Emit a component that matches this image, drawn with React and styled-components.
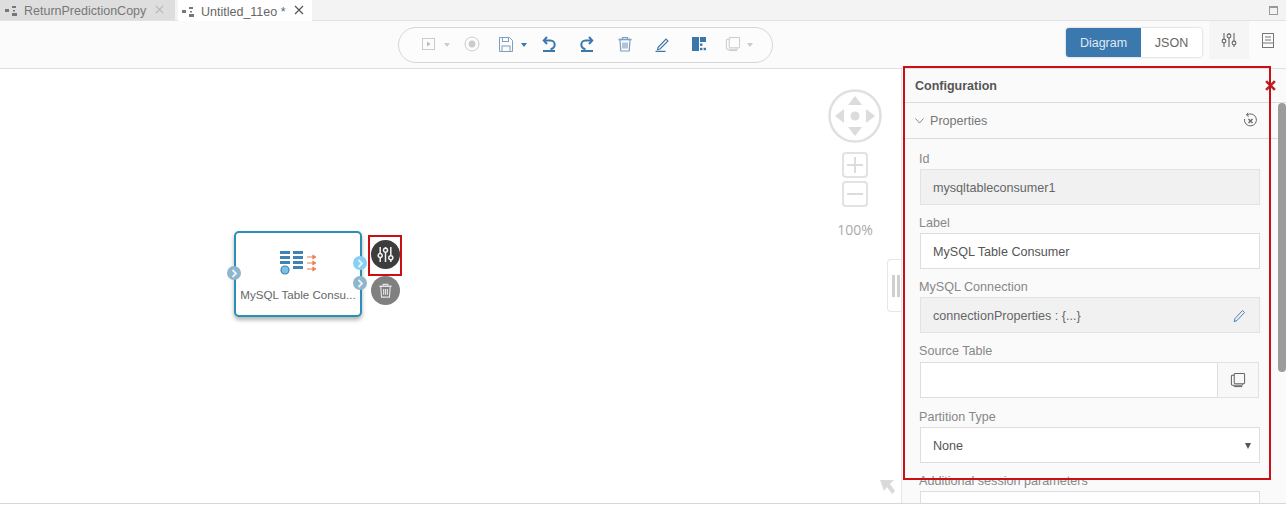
import React from "react";
import styled, { createGlobalStyle } from "styled-components";

const Global = createGlobalStyle`
  html, body { margin: 0; padding: 0; background: #fff; overflow: hidden; }
  body { font-family: "Liberation Sans", Arial, sans-serif; color: #555; }
  #root { width: 1286px; height: 508px; }
`;

const Page = styled.div`
  position: relative;
  width: 1286px;
  height: 508px;
  display: flex;
  flex-direction: column;
  overflow: hidden;
  background: #fff;
`;
const TabBar = styled.div`
  height: 20px;
  flex: none;
  display: flex;
  align-items: flex-end;
  background: #f3f3f3;
  border-bottom: 1px solid #e2e2e2;
  box-sizing: content-box;
  padding-right: 8px;
`;
const Tab = styled.div`
  height: ${(p) => (p.$active ? 21 : 20)}px;
  width: ${(p) => p.$w}px;
  margin-right: ${(p) => p.$mr || 0}px;
  margin-bottom: ${(p) => (p.$active ? -1 : 0)}px;
  box-sizing: border-box;
  display: flex;
  align-items: center;
  gap: 6px;
  padding: 2px 0 0 ${(p) => (p.$active ? 4 : 5)}px;
  font-size: 12.5px;
  background: ${(p) => (p.$active ? "#fff" : "#dedede")};
  color: ${(p) => (p.$active ? "#666" : "#777")};
`;
const TabClose = styled.span`
  margin: -3px 0 0 ${(p) => (p.$active ? 2 : 3)}px;
  display: flex;
  color: ${(p) => (p.$active ? "#555" : "#b5b5b5")};
`;
const WinButton = styled.div`
  margin-left: auto;
  align-self: center;
  display: flex;
`;
const Toolbar = styled.div`
  height: 48px;
  flex: none;
  position: relative;
  display: flex;
  align-items: flex-start;
  background: #fbfbfb;
  border-bottom: 1px solid #e0e0e0;
  box-sizing: border-box;
  padding-left: 398px;
`;
const Pill = styled.div`
  width: 375px;
  height: 36px;
  margin-top: 6px;
  box-sizing: border-box;
  border: 1px solid #d6d6d6;
  border-radius: 18px;
  background: #fcfcfc;
  display: flex;
  align-items: center;
  padding: 0 0 2px 23px;
`;
const ToolIcon = styled.span`
  display: flex;
  align-items: center;
  margin-right: ${(p) => p.$mr || 0}px;
`;
const Caret = styled.span`
  width: 0;
  height: 0;
  border-left: 3.5px solid transparent;
  border-right: 3.5px solid transparent;
  border-top: 4px solid ${(p) => p.$c || "#ccc"};
  margin: 2px ${(p) => p.$mr || 0}px 0 ${(p) => p.$ml ?? 8}px;
`;
const Right = styled.div`
  margin-left: auto;
  display: flex;
  align-items: flex-start;
  height: 100%;
`;
const Segment = styled.div`
  display: flex;
  height: 29px;
  width: 136px;
  margin-top: 7px;
  border-radius: 3px;
  background: #fff;
  box-shadow: 0 0 2px rgba(0, 0, 0, 0.3);
  margin-right: 7px;
  overflow: hidden;
  font-size: 12.5px;
`;
const SegItem = styled.div`
  flex: ${(p) => (p.$active ? "0 0 75px" : 1)};
  display: flex;
  align-items: center;
  justify-content: center;
  background: ${(p) => (p.$active ? "#3a78ad" : "#fff")};
  color: ${(p) => (p.$active ? "#dfeaf4" : "#666")};
`;
const ViewBtn = styled.div`
  width: ${(p) => (p.$active ? 40 : 37)}px;
  height: 38px;
  display: flex;
  align-items: center;
  justify-content: center;
  background: ${(p) => (p.$active ? "#f5f5f5" : "transparent")};
`;
const Main = styled.div`
  flex: 1;
  display: flex;
  min-height: 0;
  border-bottom: 1px solid #d8d8d8;
  margin-bottom: 4px;
`;
const Canvas = styled.div`
  position: relative;
  width: 901px;
  flex: none;
  background: #fff;
`;
const Node = styled.div`
  position: absolute;
  left: 234px;
  top: 162px;
  width: 128px;
  height: 86px;
  box-sizing: border-box;
  border: 2px solid #2a8fb8;
  border-radius: 5px;
  background: #fff;
  box-shadow: 0 3px 4px rgba(0, 0, 0, 0.3);
  display: flex;
  flex-direction: column;
  align-items: center;
  padding-top: 17px;
`;
const NodeIcon = styled.svg`
  margin-left: 0;
`;
const NodeLabel = styled.div`
  font-size: 11.6px;
  color: #666;
  margin-top: 13px;
  white-space: nowrap;
`;
const Port = styled.span`
  position: absolute;
  left: ${(p) => p.$x}px;
  top: ${(p) => p.$y}px;
  width: 14px;
  height: 14px;
  border-radius: 50%;
  background: ${(p) => p.$c};
  display: flex;
  align-items: center;
  justify-content: center;
`;
const RoundAction = styled.div`
  position: absolute;
  left: 371px;
  top: ${(p) => p.$y}px;
  width: 29px;
  height: 29px;
  border-radius: 50%;
  background: ${(p) => p.$c};
  display: flex;
  align-items: center;
  justify-content: center;
`;
const MapControl = styled.div`
  position: absolute;
  left: 828px;
  top: 20px;
  width: 54px;
  display: flex;
  flex-direction: column;
  align-items: center;
`;
const ZoomBox = styled.div`
  width: 26px;
  height: 26px;
  margin-top: ${(p) => p.$mt}px;
  box-sizing: border-box;
  border: 2px solid #e2e2e2;
  border-radius: 4px;
  display: flex;
  align-items: center;
  justify-content: center;
`;
const Percent = styled.div`
  font-family: "Open Sans", sans-serif;
  font-size: 14px;
  line-height: 19px;
  color: #aaa;
  margin-top: 13px;
`;
const Handle = styled.div`
  position: absolute;
  left: 887px;
  top: 190px;
  width: 15px;
  height: 53px;
  box-sizing: border-box;
  border: 1px solid #e6e6e6;
  border-right: none;
  border-radius: 4px 0 0 4px;
  background: #fff;
  display: flex;
  gap: 2px;
  padding: 15px 0 0 4px;
`;
const HandleBar = styled.i`
  width: 3px;
  height: 22px;
  background: #cfcfcf;
`;
const CornerArrow = styled.span`
  position: absolute;
  left: 880px;
  top: 411px;
  display: flex;
`;
const Panel = styled.div`
  position: relative;
  flex: 1;
  background: #fafafa;
  border-left: 1px solid #e6e6e6;
  box-sizing: border-box;
  overflow: hidden;
`;
const PanelHead = styled.div`
  height: 34px;
  box-sizing: border-box;
  border-bottom: 1px solid #dcdcdc;
  display: flex;
  align-items: center;
  padding: 0 0 0 13px;
  font-size: 12.5px;
  font-weight: bold;
  color: #555;
`;
const CloseX = styled.span`
  position: absolute;
  left: 363px;
  top: 11px;
  display: flex;
`;
const Section = styled.div`
  height: 36px;
  box-sizing: border-box;
  border-bottom: 1px solid #dcdcdc;
  display: flex;
  align-items: center;
  gap: 6px;
  padding: 0 28px 0 13px;
  font-size: 12.6px;
  color: #777;
`;
const SectionEnd = styled.span`
  margin: -2px 0 0 auto;
  display: flex;
`;
const Fields = styled.div`
  padding: 12px 26px 0 18px;
  display: flex;
  flex-direction: column;
`;
const Field = styled.div`
  height: ${(p) => p.$h || 64}px;
  flex: none;
`;
const Label = styled.div`
  font-size: 12.6px;
  line-height: 14px;
  height: 15px;
  color: #888;
  padding-top: 2px;
  margin-bottom: ${(p) => p.$mb ?? 2}px;
  margin-top: -1px;
  margin-left: -1px;
`;
const Input = styled.div`
  height: 36px;
  box-sizing: border-box;
  border: 1px solid ${(p) => (p.$off ? "#e2e2e2" : "#dedede")};
  background: ${(p) => (p.$off ? "#f1f1f1" : "#fff")};
  display: flex;
  align-items: center;
  padding: 2px ${(p) => p.$pr ?? 13}px 0 12px;
  font-size: 12.6px;
  color: ${(p) => (p.$off ? "#666" : "#555")};
  justify-content: space-between;
`;
const Group = styled.div`
  display: flex;
  height: 36px;
  width: 339px;
`;
const GroupInput = styled.div`
  flex: 1;
  box-sizing: border-box;
  border: 1px solid #dedede;
  background: #fff;
`;
const GroupBtn = styled.div`
  width: 41px;
  box-sizing: border-box;
  border: 1px solid #e2e2e2;
  border-left: none;
  background: #f8f8f8;
  display: flex;
  align-items: center;
  justify-content: center;
`;
const DropArrow = styled.span`
  width: 0;
  height: 0;
  border-left: 3px solid transparent;
  border-right: 3px solid transparent;
  border-top: 6px solid #555;
`;
const Scrollbar = styled.div`
  position: absolute;
  right: 0;
  top: 34px;
  width: 8px;
  height: 269px;
  background: #9c9c9c;
  border-radius: 4px;
`;
const Highlight = styled.div`
  position: absolute;
  left: ${(p) => p.$x}px;
  top: ${(p) => p.$y}px;
  width: ${(p) => p.$w}px;
  height: ${(p) => p.$h}px;
  box-sizing: border-box;
  border: 2px solid #cc0f14;
  pointer-events: none;
`;

const FlowIcon = ({ c = "#777" }) => (
  <svg width="13" height="10" viewBox="0 0 13 10" fill={c}>
    <rect x="0" y="3" width="4" height="3" />
    <rect x="7" y="0" width="4" height="2" />
    <rect x="7" y="7" width="5" height="3" />
    <rect x="8" y="4" width="2" height="1.5" />
  </svg>
);
const X = ({ s = 9, c = "currentColor", w = 1.2 }) => (
  <svg width={s} height={s} viewBox="0 0 10 10" stroke={c} strokeWidth={w} fill="none">
    <path d="M1 1 L9 9 M9 1 L1 9" />
  </svg>
);
const Sliders = ({ c = "#666", s = 16, w = 1.1 }) => (
  <svg width={s} height={s} viewBox="0 0 16 16" stroke={c} strokeWidth={w} fill="none">
    <path d="M3 1v6M3 11v4M8 1v1M8 6v9M13 1v8M13 13v2" />
    <circle cx="3" cy="9" r="1.9" />
    <circle cx="8" cy="4" r="1.9" />
    <circle cx="13" cy="11" r="1.9" />
  </svg>
);
const Trash = ({ c, s = 16, w = 1.2 }) => (
  <svg width={s} height={s} viewBox="0 0 16 16" stroke={c} strokeWidth={w} fill="none">
    <path d="M1.5 3.5h13" strokeWidth="1.6" />
    <path d="M5.5 3V1.5h5V3" />
    <path d="M3 4l.8 11h8.4L13 4" />
    <path d="M6 6.5v6M8 6.5v6M10 6.5v6" />
  </svg>
);
const Copy = ({ c, s = 17 }) => (
  <svg width={s} height={s} viewBox="0 0 17 17" stroke={c} strokeWidth="1.1" fill="none">
    <rect x="4.5" y="1.5" width="11" height="11" rx="1" />
    <path d="M4.5 3.5H2.5a1 1 0 0 0-1 1V13a1 1 0 0 0 1 1h10a1 1 0 0 0 1-1v-.5" />
    <path d="M4 15.5h9" />
  </svg>
);
const Chev = ({ c = "#e8f4fa" }) => (
  <svg width="7" height="9" viewBox="0 0 7 9" stroke={c} strokeWidth="1.8" fill="none">
    <path d="M1.5 1 L5 4.5 L1.5 8" />
  </svg>
);

export default function App() {
  const blue = "#3a77ab";
  return (
    <Page>
      <Global />
      <TabBar>
        <Tab $w={175} $mr={3}>
          <FlowIcon />
          ReturnPredictionCopy
          <TabClose>
            <X />
          </TabClose>
        </Tab>
        <Tab $w={134} $active>
          <FlowIcon />
          Untitled_11eo *
          <TabClose $active>
            <X s={10} />
          </TabClose>
        </Tab>
        <WinButton>
          <svg width="9" height="9" viewBox="0 0 9 9" fill="none" stroke="#999">
            <rect x="0.5" y="0.5" width="8" height="8" />
            <path d="M0 1.5h9" />
          </svg>
        </WinButton>
      </TabBar>
      <Toolbar>
        <Pill>
          <ToolIcon>
            <svg width="14" height="14" viewBox="0 0 14 14" fill="none" stroke="#ccc">
              <rect x="0.5" y="1.5" width="12" height="11" />
              <path d="M5 4.5l3.5 2.5-3.5 2.5z" fill="#bbb" stroke="none" />
            </svg>
          </ToolIcon>
          <Caret $mr={14} />
          <ToolIcon $mr={19}>
            <svg width="16" height="16" viewBox="0 0 16 16" fill="none" stroke="#ccc">
              <circle cx="8" cy="8" r="7" />
              <circle cx="8" cy="8" r="3.4" fill="#ccc" stroke="none" />
            </svg>
          </ToolIcon>
          <ToolIcon>
            <svg width="14" height="15" viewBox="0 0 14 15" fill="none" stroke="#7d9fc0">
              <path d="M.5.5h10l3 3v11H.5z" />
              <rect x="3.5" y="0.5" width="6" height="4" />
              <rect x="3" y="9" width="8" height="5.5" />
            </svg>
          </ToolIcon>
          <Caret $c={blue} $mr={15} />
          <ToolIcon $mr={22}>
            <svg width="15" height="16" viewBox="0 0 15 16" fill="none" stroke={blue} strokeWidth="2">
              <path d="M5 1 L1.8 4.5 L5 8" />
              <path d="M2 4.5h6.5a4.2 4.2 0 0 1 0 8.4" />
              <path d="M1 15h12" />
            </svg>
          </ToolIcon>
          <ToolIcon $mr={23}>
            <svg width="15" height="16" viewBox="0 0 15 16" fill="none" stroke={blue} strokeWidth="2">
              <path d="M10 1 L13.2 4.5 L10 8" />
              <path d="M13 4.5H6.5a4.2 4.2 0 0 0 0 8.4" />
              <path d="M2 15h12" />
            </svg>
          </ToolIcon>
          <ToolIcon $mr={22}>
            <Trash c="#7d9fc0" />
          </ToolIcon>
          <ToolIcon $mr={22}>
            <svg width="15" height="15" viewBox="0 0 15 15" fill="none" stroke={blue} strokeWidth="1.1">
              <path d="M3 10.5 L11 2 L13 4 L5 12 L2.5 12.8 Z" />
              <path d="M0.5 14.5h10" strokeWidth="1.5" />
            </svg>
          </ToolIcon>
          <ToolIcon $mr={19}>
            <svg width="14" height="14" viewBox="0 0 14 14" fill={blue}>
              <rect x="0" y="0" width="7" height="14" />
              <rect x="8" y="0" width="6" height="5" />
              <rect x="8" y="6.5" width="2.4" height="2.4" />
              <rect x="8" y="10.8" width="2.4" height="2.4" />
              <rect x="11.6" y="10.8" width="2.4" height="2.4" />
            </svg>
          </ToolIcon>
          <ToolIcon>
            <Copy c="#ccc" s={16} />
          </ToolIcon>
          <Caret $ml={6} />
        </Pill>
        <Right>
          <Segment>
            <SegItem $active>Diagram</SegItem>
            <SegItem>JSON</SegItem>
          </Segment>
          <ViewBtn $active>
            <Sliders />
          </ViewBtn>
          <ViewBtn>
            <svg width="12" height="15" viewBox="0 0 12 15" fill="none" stroke="#777">
              <rect x="0.5" y="0.5" width="11" height="14" />
              <path d="M3 4h6M3 7h6M0.5 10h11" />
            </svg>
          </ViewBtn>
        </Right>
      </Toolbar>
      <Main>
        <Canvas>
          <Node>
            <NodeIcon width="36" height="25" viewBox="0 0 36 25">
              <g fill="#3f82b5">
                <rect x="0" y="1" width="10" height="3" />
                <rect x="0" y="6" width="10" height="3" />
                <rect x="0" y="11" width="10" height="3" />
                <rect x="13" y="1" width="10" height="3" />
                <rect x="13" y="6" width="10" height="3" />
                <rect x="13" y="11" width="10" height="3" />
                <rect x="13" y="16" width="10" height="3" />
              </g>
              <circle cx="5" cy="20" r="4" fill="#7cc0e4" stroke="#3f82b5" strokeWidth="1.2" />
              <g stroke="#ef7b4a" strokeWidth="1.2" fill="#ef7b4a">
                <path d="M27 7h6M27 13h6M27 19h6" />
                <path d="M33 5.5l2.5 1.5-2.5 1.5zM33 11.5l2.5 1.5-2.5 1.5zM33 17.5l2.5 1.5-2.5 1.5z" />
              </g>
            </NodeIcon>
            <NodeLabel>MySQL Table Consu...</NodeLabel>
          </Node>
          <Port $x={227} $y={197} $c="#8fb6cc">
            <Chev />
          </Port>
          <Port $x={353} $y={187} $c="#88cff4">
            <Chev />
          </Port>
          <Port $x={353} $y={207} $c="#8fb6cc">
            <Chev />
          </Port>
          <RoundAction $y={171} $c="#3d3d3d">
            <Sliders c="#f4f4f4" s={17} w={1.4} />
          </RoundAction>
          <RoundAction $y={207} $c="#808080">
            <Trash c="#e4e4e4" s={15} />
          </RoundAction>
          <Highlight $x={368} $y={166} $w={34} $h={41} />
          <MapControl>
            <svg width="54" height="54" viewBox="0 0 54 54">
              <circle cx="27" cy="27" r="25.5" fill="#fff" stroke="#e0e0e0" strokeWidth="2.5" />
              <g fill="#dcdcdc">
                <path d="M27 7l7 9H20zM27 47l7-9H20zM7 27l9-7v14zM47 27l-9-7v14z" />
                <circle cx="27" cy="27" r="4.5" />
              </g>
            </svg>
            <ZoomBox $mt={9}>
              <svg width="16" height="16" viewBox="0 0 16 16" stroke="#dcdcdc" strokeWidth="2">
                <path d="M8 0v16M0 8h16" />
              </svg>
            </ZoomBox>
            <ZoomBox $mt={3}>
              <svg width="16" height="4" viewBox="0 0 16 4" stroke="#dcdcdc" strokeWidth="2">
                <path d="M0 2h16" />
              </svg>
            </ZoomBox>
            <Percent>100%</Percent>
          </MapControl>
          <Handle>
            <HandleBar />
            <HandleBar />
          </Handle>
          <CornerArrow>
            <svg width="15" height="15" viewBox="0 0 15 15" fill="#dadada">
              <path d="M0 0h14l-4 4 5 7-3 3-5-7-3 4z" />
            </svg>
          </CornerArrow>
        </Canvas>
        <Panel>
          <PanelHead>Configuration</PanelHead>
          <CloseX>
            <X s={11} c="#b5262c" w={2.4} />
          </CloseX>
          <Section>
            <svg width="9" height="6" viewBox="0 0 9 6" fill="none" stroke="#888">
              <path d="M.5 .5L4.5 5l4-4.5" />
            </svg>
            Properties
            <SectionEnd>
              <svg width="15" height="16" viewBox="0 0 15 16" fill="none" stroke="#666">
                <path d="M4 3a6 6 0 1 1-2.5 4" />
                <path d="M5 .8L3.4 3l2.4 1.4" />
                <path d="M5.5 7l4 4M9.5 7l-4 4" strokeWidth="1.4" />
              </svg>
            </SectionEnd>
          </Section>
          <Fields>
            <Field>
              <Label>Id</Label>
              <Input $off>mysqltableconsumer1</Input>
            </Field>
            <Field>
              <Label>Label</Label>
              <Input>MySQL Table Consumer</Input>
            </Field>
            <Field>
              <Label>MySQL Connection</Label>
              <Input $off>
                connectionProperties : {"{...}"}
                <svg width="13" height="14" viewBox="0 0 13 14" fill="none" stroke="#4a80ad">
                  <path d="M2 9.5L9.5 1.5l2 2L4 11.5 1.2 12.6z" />
                </svg>
              </Input>
            </Field>
            <Field $h={66}>
              <Label $mb={3}>Source Table</Label>
              <Group>
                <GroupInput />
                <GroupBtn>
                  <Copy c="#666" s={16} />
                </GroupBtn>
              </Group>
            </Field>
            <Field>
              <Label>Partition Type</Label>
              <Input $pr={8}>
                None
                <DropArrow />
              </Input>
            </Field>
            <Field>
              <Label>Additional session parameters</Label>
              <Input />
            </Field>
          </Fields>
          <Scrollbar />
        </Panel>
      </Main>
      <Highlight $x={903} $y={66} $w={368} $h={414} />
    </Page>
  );
}
